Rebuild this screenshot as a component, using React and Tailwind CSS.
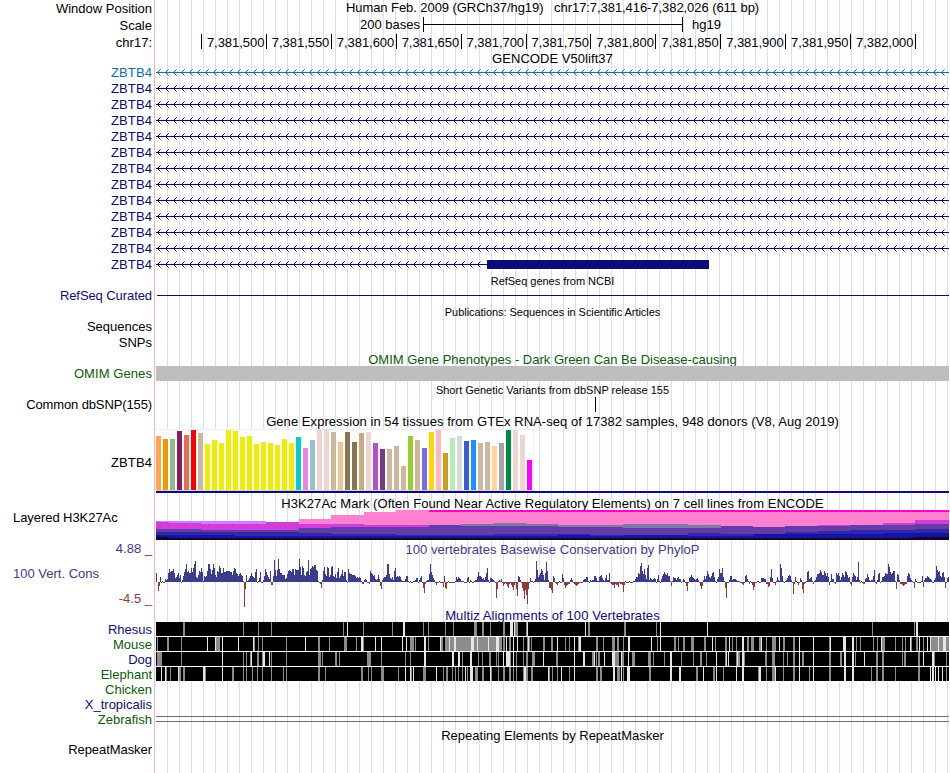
import React from "react";

const NAVY = "#0c0c78";

const TICKS = [
  "7,381,500", "7,381,550", "7,381,600", "7,381,650", "7,381,700", "7,381,750",
  "7,381,800", "7,381,850", "7,381,900", "7,381,950", "7,382,000",
];

// [height, colour] for each GTEx tissue
const TISSUES = [
  [54, "#ffa54f"], [51, "#ee9a00"], [51, "#8fbc8f"], [59, "#8b1c62"], [55, "#ee6a50"], [60, "#ff0000"],
  [57, "#cdb79e"], [46, "#eeee00"], [50, "#eeee00"], [47, "#eeee00"], [60, "#eeee00"], [59, "#eeee00"],
  [53, "#eeee00"], [54, "#eeee00"], [46, "#eeee00"], [48, "#eeee00"], [47, "#eeee00"], [45, "#eeee00"],
  [51, "#eeee00"], [47, "#eeee00"], [53, "#00cdcd"], [42, "#ee82ee"], [50, "#9ac0cd"], [60, "#eed5d2"],
  [61, "#eed5d2"], [58, "#cdb79e"], [48, "#eec591"], [58, "#8b7355"], [48, "#8b7355"], [57, "#cdaa7d"],
  [58, "#eed5d2"], [47, "#b452cd"], [41, "#7a378b"], [41, "#cdb79e"], [44, "#cdb79e"], [24, "#cdb79e"],
  [54, "#9acd32"], [50, "#cdb79e"], [42, "#7a67ee"], [58, "#ffd700"], [60, "#ffb6c1"], [37, "#cd9b1d"],
  [52, "#b4eeb4"], [54, "#d9d9d9"], [49, "#3a5fcd"], [50, "#1e90ff"], [47, "#cdb79e"], [48, "#cdb79e"],
  [44, "#ffd39b"], [47, "#a6a6a6"], [60, "#008b45"], [60, "#eed5d2"], [55, "#eed5d2"], [30, "#ff00ff"],
];

// stacked histone signal: start x, then the top of each layer (30 = absent)
// [x, hot, pink, lilac, magenta, slate, violet, blue, deep, black]
const H3K = [
  [0, 30, 30, 11, 12, 30, 19, 22, 25, 27],
  [13, 30, 30, 11, 13, 30, 19, 22, 25, 28],
  [45, 30, 30, 11, 14, 30, 20, 22, 25, 28],
  [78, 30, 30, 11, 14, 30, 20, 22, 26, 28],
  [110, 30, 30, 30, 12, 30, 20, 22, 26, 28],
  [143, 30, 9, 30, 14, 30, 18, 23, 26, 28],
  [175, 30, 5, 30, 14, 30, 17, 24, 26, 28],
  [208, 30, 2, 30, 15, 30, 17, 24, 26, 28],
  [240, 30, 0, 30, 15, 30, 17, 25, 26, 28],
  [273, 0, 2, 30, 30, 30, 15, 25, 26, 28],
  [305, 0, 2, 30, 30, 14, 16, 25, 26, 28],
  [338, 0, 2, 30, 30, 13, 16, 24, 26, 28],
  [370, 0, 2, 30, 30, 14, 16, 24, 26, 28],
  [402, 0, 2, 30, 30, 15, 17, 24, 25, 28],
  [434, 0, 2, 30, 30, 15, 17, 25, 26, 28],
  [467, 0, 2, 30, 30, 14, 18, 25, 25, 28],
  [532, 0, 2, 30, 30, 15, 18, 23, 26, 28],
  [565, 0, 2, 30, 30, 30, 16, 24, 26, 28],
  [597, 0, 2, 30, 30, 30, 17, 30, 24, 28],
  [629, 0, 2, 30, 30, 30, 16, 22, 24, 28],
  [662, 0, 2, 30, 15, 30, 16, 21, 24, 28],
  [694, 0, 2, 30, 30, 30, 15, 20, 24, 28],
  [727, 0, 2, 30, 13, 30, 15, 20, 23, 28],
  [759, 0, 2, 30, 10, 30, 14, 19, 23, 27],
  [793],
];
const H3K_COLORS = ["#ff00cc", "#ff80d0", "#d080ff", "#d23cd8", "#7c78a8", "#643ca8", "#3028a8", "#1414a4", "#140428"];

// one value per pixel column, in pixels from the baseline
const PHYLOP = [
  9, 0, -9, -4, 5, -1, 1, -1, -1, 3, 2, 3, 9, 13, 10, 11, 11, 13, 9, 4, 5, 7, 9, 4, 7, -1, 2, 6, 10, 13, 18, 10, 11, 9, 9, 14, 10, 14, 18, 21,
  5, 4, 7, 11, 10, 14, 10, 1, 6, 5, 6, 11, 18, 18, 13, 8, 12, 18, 14, 7, 5, 11, 10, 16, 14, 9, 9, 14, 10, 10, 11, 11, 11, 11, 10, 10, 7, 11, 14, 13,
  9, 8, 6, 8, 9, 7, 6, 1, -24, -7, 7, 1, 2, 4, 6, 9, 6, 5, 4, 10, 13, -1, 1, 4, 10, -1, -1, 2, 6, 13, 10, 7, 5, 3, 11, -3, -3, 6, 22, 12,
  6, 12, 23, 13, 9, 9, 7, 7, 7, 3, 4, 8, 11, 12, 11, 10, 13, 13, 7, 13, 12, 12, 12, 23, 15, 7, 16, 14, 7, 6, 10, 11, 22, 7, 13, 14, 16, 15, 17, 17,
  12, 11, 1, -1, -2, -6, 2, 11, 15, 8, 6, 15, 14, 5, 7, 15, 16, 6, 5, 8, 4, 10, 14, 4, 6, 8, 12, 6, 10, 10, 2, -1, 13, 9, 8, 8, 7, 7, 7, 6,
  4, 5, 4, 5, 4, 1, -2, -2, 2, 3, 2, -1, -1, -2, 11, 9, 8, 6, 7, 3, 2, 3, 7, 3, -4, -7, 2, 4, 5, 5, 7, 18, 18, 8, 4, 3, 5, 2, 11, 14,
  5, 6, 5, 6, 5, 2, 1, 1, 1, 3, 6, 6, 1, -1, 1, -1, -1, 1, 1, 2, 4, 4, -1, 2,
  4, 6, -1, -6, -11, -2, 1, 2, 2, 8, 18, 10, 7, 4, 2, -1, -3, -1, -1, 1, -1, -1, -1, -5, 6, -6, -7, -1, 1, -1, -1, -1, -1, -1, -1, 1, 5, 3, 5, 4,
  3, 1, 1, 1, -1, -1, -1, 4, 5, -1, 2, 1, -1, -1, 1, 2, 2, 5, 10, 6, 6, 5, 3, 4, 2, 5, 9, 14, 2, -1, 4, 4, 3, 2, 1, -1, -16, -7, 1, 2,
  1, 3, -1, -4, -2, -1, -2, -4, -6, -2, -1, -3, -5, -8, -3, -1, -7, -14, 6, 5, 2, -1, -6, -9, -17, -8, -13, -22, -7, -1, 4, 1, 1, -1, 1, 3, 21, 12, 5, 7,
  9, 13, 11, 7, 2, 9, 20, 11, 2, -6, -6, -8, -11, 6, 4, -1, -2, -3, -1, 1, -1, -1, 8, 4, -3, -6, -4, -3, -2, -2, 2, 4, 2, -1, -2, -3, -4, -3, -2, -1,
  -1, -1, -1, 2, 3, 3, 5, 5, 1, -1, 2, 1, 2, 2, 6, 6, 4, 1, 1, 5, 6, 7, 4, 2, 1, 4, 7, 2, 2, 9, -1, -2, -3, -3, -6, -2, -3, -3, -5, -1,
  -2, -2, -3, -10, -3, 1, -1, -1, -1, 1, -1, -1, -1, 1, 1, 3, 5, 5, 9, 8, 16, 19, 11, 8, 13, 7, 3, 14, 17, 2, 4, 3, 2, 3, 4, 3, -1, 3, 7, 1,
  -1, 3, 6, 8, 10, 8, 7, 9, 6, 6, 1, -4, 1, 5, 4, 4, 2, 4, 5, 3, 3, -1, 1, 3, 2, -1, -4, -9, -1, 4,
  5, 7, 5, 4, 3, 2, 3, 4, 2, -1, -4, -7, -4, 2, 6, 3, 6, 11, 8, 5, 4, 6, 9, 10, 5, 1, -1, 3, 5, 13, 9, 9, 14, 5, 1, -6, -16, -1, -1, 2,
  6, 6, 2, 3, 3, 3, 2, 1, 1, 1, -1, -1, -2, -3, -1, 6, 7, 3, 1, -2, 1, -1, -3, -8, -5, -1, -1, 1, 1, -1, -1, 4, 4, 4, 3, 3, -2, -2, -5, -4,
  5, 13, 4, -1, -1, -3, 1, 5, 2, 1, 18, 14, 6, 1, -1, 1, 2, 4, 6, 7, 6, 2, -1, -12, -2, 5, 1, -1, -3, -1, 4, 2, -7, -11, -2, -1, 1, 10, 11, 3,
  4, 5, 1, -2, 1, 2, 5, 8, 8, 9, 12, 10, 7, 7, 11, 9, 6, 9, 5, -3, 1, 8, 3, 3, -1, -2, 9, 7, 9, 6, 2, 5, 9, 7, 5, 11, 10, 7, 4, 5,
  -2, -4, 5, 9, 7, 6, 2, 5, 20, 2, -1, 1, -1, -2, -2, 3, 4, 8, 5, 2, 1, 2, 2, 6, 12, -1, -2, 2, 8, 9, -1, 1, 5, 5, 6, 9, 8, 8, 18, 15,
  10, 8, 9, 11, 11, 1, -7, 8, 7, 2, -2, -2, -3, -4, -3, -2, -2, 6, 9, 8, 4, 2, 1, -1, -6, 3, 1, -1, -1, -1, -1, 1, 6, -5, 2, 4, 4, 6, 5, 4,
  3, 2, -1, -1, 2, 4, 16, 12, 10, 11, 6, 5, 9, 10, 5, -6, -1, 4, 5,
];

// "x" or "x:width" stripes inside each alignment block
const SPECIES = [
  {
    name: "Rhesus",
    color: NAVY,
    gray: "27:2 87 102 115 187 207 236 267 272 289 297 318:3 326:2 334 347:2 359:3 370 432:2 468:2 500 716 758",
    light: "191 247:2 354:3 358 371 429 504 551 760:2",
  },
  {
    name: "Mouse",
    color: "#0c5a0c",
    gray: "1 11:2 25 60:4 98 102 106 130 162:2 173 188:3 200 207 254:4 259 272 285:2 289:4 294:4 300:15 318:3 322:10 333:7 343:3 347:2 353:2 367 371:3 375 387:2 395:2 409 413 422 440:2 447 456:3 461:2 467 501 518:2 522 527:2 535:3 548:2 559 569:2 576 580 591:2 595:3 603:2 610 616:4 627:2 637:2 673 700 704 717 721 726:3 739 746 749 755 760:2 767 775:7 783:4 790:3",
    light: "51 59 66 82 97 149 205:2 219 225 246 250 268:2 284 293 298:2 315:3 321 332 340:3 350 357 361 372 401 418 423:2 472:2 495 504 556 573 586:2 605 623 643 657 674 687:3 696:2 725 754 763 771 774 782 787:3",
  },
  {
    name: "Dog",
    color: NAVY,
    gray: "1:5 25 87 90 94 101:2 106 115 130 162:3 166 179:2 183 211:4 225 249 254 306 322 326 333:2 340 342 354 360 367 370:2 376:3 400:2 436:2 440 442:2 459:4 466:2 476:3 492:3 497 508 525 537 544:2 550 569 580 582:2 588 609:2 616:3 627 631 637:2 646:2 673:2 684:2 699 720:2 726:2 746 748:2 762:2 778 790",
    light: "66 95 107:2 113 268:2 296:2 302:2 314:2 347 350:4 357 387 418 427:2 438 448 456:3 465 472 514:2 560 570 572 581 586:2 643 657 688:2 696:2 708 767 776:2",
  },
  {
    name: "Elephant",
    color: "#0c5a0c",
    gray: "10 14 23:2 27:2 49 76:2 87 90 96 101 106 115 127 130 162:2 169 205:2 212 215 225:3 242 255 267:3 287 290:2 296 299 302 306 311 319:3 326:2 335 342 347:2 353:2 357 360 367 370:2 375:2 393 396 401 413 440:2 444:2 461:3 467 493:2 540:2 557:2 567 602 610 616:3 627 637:2 653 673:2 715 720:2 726:2 739 762:2 790",
    light: "5 9 22 47:2 66 249 254 257 280 309 314:3 334 368:2 392 405 418 457:2 465 471:3 514:2 523:2 547 560 580 586:2 603:2 619 643 657 688:2 696:2 774 776:2 779 782 786",
  },
];

function parseStripes(text) {
  return text.split(" ").map((s) => {
    const [x, w] = s.split(":");
    return [Number(x), Number(w || 1)];
  });
}

function Row({ label, labelClass = "", className = "", children }) {
  return (
    <div className={`flex ${className}`}>
      <div className={`flex w-[152px] shrink-0 items-center justify-end whitespace-pre ${labelClass}`}>{label}</div>
      <div className="ml-1 w-[793px] shrink-0">{children}</div>
    </div>
  );
}

function Title({ className = "", children }) {
  return (
    <div className={`ml-[156px] flex w-[793px] items-center justify-center whitespace-pre ${className}`}>{children}</div>
  );
}

function GeneLine({ color, exon }) {
  const end = exon ? 331 : 793;
  const arrows = [];
  for (let x = 1; x < end - 3; x += 8) {
    arrows.push(`M${x + 3.5} 5.5L${x + 0.5} 8.5L${x + 3.5} 11.5`);
  }
  return (
    <svg width="793" height="16" className="block">
      <rect x="0" y="8" width={end} height="1" fill={color} />
      <path d={arrows.join("")} fill="none" stroke={color} strokeWidth="1" />
      {exon && <rect x="331" y="4" width="222" height="9" fill={color} />}
    </svg>
  );
}

function GtexChart() {
  return (
    <svg width="793" height="65" className="block" shapeRendering="crispEdges">
      <rect x="0" y="0" width="378" height="62" fill="#f0f0f0" />
      <rect x="0" y="1" width="377" height="60" fill="#fff" />
      <rect x="0" y="61" width="378" height="1" fill="#d3d3d3" />
      {TISSUES.map(([h, color], i) => (
        <rect key={i} x={i * 7} y={61 - h} width="5" height={h} fill={color} />
      ))}
      <rect x="0" y="62" width="793" height="2" fill={NAVY} />
    </svg>
  );
}

function HistoneChart() {
  return (
    <svg width="793" height="30" className="block" shapeRendering="crispEdges">
      {H3K.slice(0, -1).map(([x, ...tops], i) =>
        tops.map((top, k) =>
          top < 30 ? (
            <rect key={`${i}-${k}`} x={x} y={top} width={H3K[i + 1][0] - x} height={30 - top} fill={H3K_COLORS[k]} />
          ) : null
        )
      )}
    </svg>
  );
}

function PhyloChart() {
  return (
    <svg width="793" height="50" className="block" shapeRendering="crispEdges">
      {PHYLOP.map((v, i) =>
        v >= 0 ? (
          <rect key={i} x={i} y={24 - v} width="1" height={v} fill="#3c3c8c" />
        ) : (
          <rect key={i} x={i} y="24" width="1" height={-v} fill="#8c3c3c" />
        )
      )}
      <rect x="88" y="47" width="1" height="2" fill="#ff00ff" />
    </svg>
  );
}

function Alignment({ gray, light }) {
  return (
    <svg width="793" height="15" className="block" shapeRendering="crispEdges">
      <rect width="793" height="15" fill="#fff" />
      <rect width="793" height="14" fill="#000" />
      {parseStripes(gray).map(([x, w]) => (
        <rect key={x} x={x} width={w} height="14" fill="#8c8c8c" />
      ))}
      {parseStripes(light).map(([x, w]) => (
        <rect key={x} x={x} width={w} height="14" fill="#e6e6e6" />
      ))}
    </svg>
  );
}

export default function App() {
  return (
    <div className="h-[773px] w-[950px] overflow-hidden bg-white font-['Liberation_Sans',Arial,sans-serif] text-[13px] leading-[15px] text-black">
      <div className="flex h-full flex-col bg-[linear-gradient(#ffb4b4,#ffb4b4),repeating-linear-gradient(to_right,#dcdcf8_0px,#dcdcf8_1px,transparent_1px,transparent_12px)] bg-[size:1px_100%,782px_100%] bg-[position:154px_0,167px_0] bg-no-repeat">
        <Row label="Window Position" className="h-[17px]">
          <div className="flex h-[15px] items-center justify-center tracking-[-0.065px] whitespace-pre">
            {"Human Feb. 2009 (GRCh37/hg19)   chr17:7,381,416-7,382,026 (611 bp)"}
          </div>
        </Row>
        <Row label="Scale" className="h-[17px]">
          <div className="flex h-[15px]">
            <div className="w-[264px] text-right">200 bases</div>
            <div className="ml-[3px] flex w-[260px] items-center border-x border-black">
              <div className="h-px w-full bg-black" />
            </div>
            <div className="ml-[9px]">hg19</div>
          </div>
        </Row>
        <Row label="chr17:" className="h-[17px]">
          <div className="ml-[45px] flex h-[15px]">
            {TICKS.map((t) => (
              <div
                key={t}
                className="w-[64.91px] shrink-0 border-l border-black pt-px pr-[1.5px] text-right tracking-[-0.04px]"
              >
                {t}
              </div>
            ))}
            <div className="w-px bg-black" />
          </div>
        </Row>
        <Title className="h-[13px] pt-[2px] tracking-[0.05px]">GENCODE V50lift37</Title>

        {Array.from({ length: 13 }, (_, i) => (
          <Row
            key={i}
            label="ZBTB4"
            className="h-[16px]"
            labelClass={i === 0 ? "tracking-[0.1px] text-[#0c6eb4]" : "tracking-[0.1px] text-[#0c0c78]"}
          >
            <GeneLine color={i === 0 ? "#0c6eb4" : NAVY} exon={i === 12} />
          </Row>
        ))}

        <Title className="h-[17px] pt-px text-[11px] tracking-[-0.03px]">RefSeq genes from NCBI</Title>
        <Row label="RefSeq Curated" className="h-[14px]" labelClass="pb-[2px] tracking-[-0.08px] text-[#0c0c78]">
          <div className="mt-[6px] ml-px h-px bg-[#0c0c78]" />
        </Row>
        <Title className="h-[16px] pt-[2px] text-[11px] tracking-[-0.05px]">
          Publications: Sequences in Scientific Articles
        </Title>
        <Row label="Sequences" className="h-[16px]" labelClass="pb-[2px]" />
        <Row label="SNPs" className="h-[16px]" labelClass="pb-[2px]" />

        <Title className="h-[15px] pt-[2px] text-[#0c5a0c]">
          OMIM Gene Phenotypes - Dark Green Can Be Disease-causing
        </Title>
        <Row label="OMIM Genes" className="h-[15px]" labelClass="tracking-[0.08px] text-[#0c5a0c]">
          <div className="h-full bg-[#bebebe]" />
        </Row>

        <Title className="h-[16px] pt-[3px] text-[11px]">Short Genetic Variants from dbSNP release 155</Title>
        <Row label="Common dbSNP(155)" className="h-[15px]" labelClass="tracking-[-0.12px]">
          <div className="ml-[439px] h-full w-px bg-black" />
        </Row>

        <Title className="h-[17px] pt-[2px] tracking-[0.06px]">
          Gene Expression in 54 tissues from GTEx RNA-seq of 17382 samples, 948 donors (V8, Aug 2019)
        </Title>
        <Row label="ZBTB4" className="h-[65px]" labelClass="pt-[2px] tracking-[0.1px]">
          <GtexChart />
        </Row>

        <Title className="h-[16px] pt-[3px] tracking-[0.055px]">
          H3K27Ac Mark (Often Found Near Active Regulatory Elements) on 7 cell lines from ENCODE
        </Title>
        <Row
          label="Layered H3K27Ac"
          className="h-[30px]"
          labelClass="!items-start !justify-start pl-[13px] tracking-[-0.06px]"
        >
          <HistoneChart />
        </Row>

        <Row label="4.88 _" className="h-[18px]" labelClass="pb-[2px] text-[#3c3c8c]">
          <div className="flex h-full items-center justify-center pt-px tracking-[0.045px] text-[#3c3c8c]">
            100 vertebrates Basewise Conservation by PhyloP
          </div>
        </Row>
        <Row
          className="h-[50px]"
          labelClass="flex-col !items-stretch !justify-between pt-[8px] pb-[2px]"
          label={
            <>
              <div className="pl-[13px] text-[#3c3c8c]">100 Vert. Cons</div>
              <div className="text-right text-[#8c3c3c]">-4.5 _</div>
            </>
          }
        >
          <PhyloChart />
        </Row>

        <Title className="h-[14px] tracking-[0.1px] text-[#0c0c78]">Multiz Alignments of 100 Vertebrates</Title>
        {SPECIES.map((s) => (
          <Row
            key={s.name}
            label={s.name}
            className="h-[15px]"
            labelClass={s.color === NAVY ? "text-[#0c0c78]" : "text-[#0c5a0c]"}
          >
            <Alignment gray={s.gray} light={s.light} />
          </Row>
        ))}
        <Row label="Chicken" className="h-[15px]" labelClass="text-[#0c5a0c]" />
        <Row label="X_tropicalis" className="h-[15px]" labelClass="text-[#0c0c78]" />
        <Row label="Zebrafish" className="h-[15px]" labelClass="text-[#0c5a0c]">
          <div className="mt-[4px] h-[6px] border-y border-[#6e6e6e]" />
        </Row>

        <Title className="h-[16px] pt-px">Repeating Elements by RepeatMasker</Title>
        <Row label="RepeatMasker" className="h-[15px]" labelClass="pb-[2px] tracking-[-0.06px]" />
      </div>
    </div>
  );
}
